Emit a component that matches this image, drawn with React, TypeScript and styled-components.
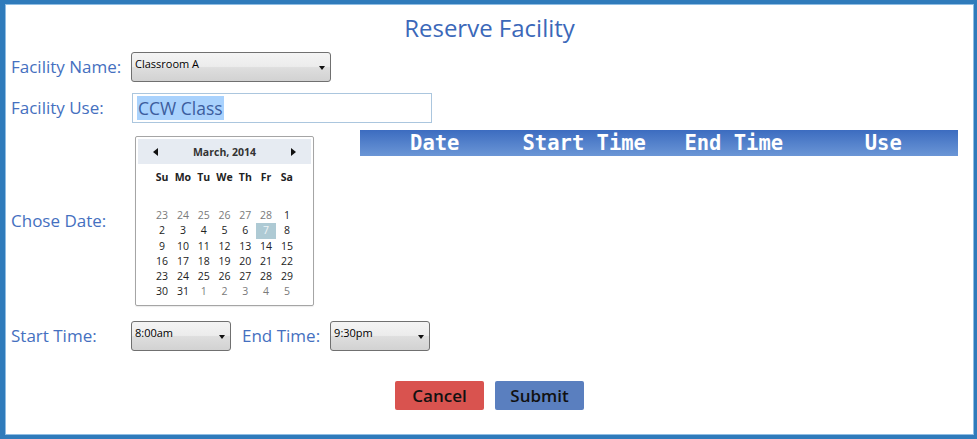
import React from "react";
import styled, { createGlobalStyle } from "styled-components";

const GlobalStyle = createGlobalStyle`
  html, body {
    margin: 0;
    padding: 0;
    background: #ffffff;
  }
  body {
    font-family: "Open Sans", "Noto Sans", sans-serif;
  }
  * {
    box-sizing: border-box;
  }
`;

const LABEL_BLUE = "#4570c0";

const weekDays = ["Su", "Mo", "Tu", "We", "Th", "Fr", "Sa"];

type Day = { n: number; other?: boolean; selected?: boolean };

const days: Day[] = [
  ...[23, 24, 25, 26, 27, 28].map((n) => ({ n, other: true })),
  ...Array.from({ length: 31 }, (_, i) => ({ n: i + 1, selected: i + 1 === 7 })),
  ...[1, 2, 3, 4, 5].map((n) => ({ n, other: true })),
];

const columns = ["Date", "Start Time", "End Time", "Use"];

const App = () => {
  return (
    <>
      <GlobalStyle />
      <Frame>
        <Title>Reserve Facility</Title>

        <Row $top={8}>
          <Label>Facility Name:</Label>
          <Combo $width={200}>
            <span>Classroom A</span>
            <Caret />
          </Combo>
        </Row>

        <Row $top={11}>
          <Label>Facility Use:</Label>
          <TextBox>
            <Selected>CCW Class</Selected>
          </TextBox>
        </Row>

        <DateRow>
          <DateLabel>Chose Date:</DateLabel>
          <Calendar>
            <CalHeader>
              <Arrow $dir="left" />
              <Month>March, 2014</Month>
              <Arrow $dir="right" />
            </CalHeader>
            <DayGrid>
              {weekDays.map((d) => (
                <WeekDay key={d}>{d}</WeekDay>
              ))}
            </DayGrid>
            <DayGrid $dates>
              {days.map((d, i) => (
                <DateCell key={i} $other={d.other} $selected={d.selected}>
                  {d.n}
                </DateCell>
              ))}
            </DayGrid>
          </Calendar>
          <TableArea>
            <TableHead>
              {columns.map((c) => (
                <HeadCell key={c}>{c}</HeadCell>
              ))}
            </TableHead>
          </TableArea>
        </DateRow>

        <Row $top={15}>
          <Label>Start Time:</Label>
          <Combo $width={100}>
            <span>8:00am</span>
            <Caret />
          </Combo>
          <InlineLabel>End Time:</InlineLabel>
          <Combo $width={100}>
            <span>9:30pm</span>
            <Caret />
          </Combo>
        </Row>

        <Buttons>
          <Button $bg="#d9534f">Cancel</Button>
          <Button $bg="#5a7fbf">Submit</Button>
        </Buttons>
      </Frame>
    </>
  );
};

export default App;

const Frame = styled.div`
  width: 977px;
  height: 439px;
  border: 4px solid #2f7bbb;
  border-left-width: 5px;
  border-right-width: 3px;
  box-shadow: inset 0 0 0 1px #8fbde3;
  padding: 0 0 0 6px;
  display: flex;
  flex-direction: column;
`;

const Title = styled.h1`
  margin: 8px 0 0;
  text-align: center;
  font-weight: 400;
  font-size: 24px;
  line-height: 32px;
  color: #3b68b9;
  padding-right: 6px;
`;

const Row = styled.div<{ $top: number }>`
  display: flex;
  align-items: center;
  margin-top: ${(p) => p.$top}px;
`;

const Label = styled.div`
  width: 120px;
  flex-shrink: 0;
  font-size: 17px;
  color: ${LABEL_BLUE};
  line-height: 22px;
`;

const DateLabel = styled(Label)`
  padding-top: 6px;
`;

const InlineLabel = styled(Label)`
  width: auto;
  margin: 0 10px 0 11px;
`;

const Combo = styled.div<{ $width: number }>`
  position: relative;
  width: ${(p) => p.$width}px;
  height: 30px;
  border: 1px solid #707070;
  border-radius: 3px;
  background: linear-gradient(
    to bottom,
    #f4f4f4 0%,
    #ececec 48%,
    #dedede 52%,
    #d2d2d2 100%
  );
  padding: 3px 0 0 3px;
  font-family: "Open Sans", sans-serif;
  font-size: 11px;
  line-height: 15px;
  color: #000;
`;

const Caret = styled.i`
  position: absolute;
  right: 5px;
  top: 13px;
  width: 0;
  height: 0;
  border-left: 3.5px solid transparent;
  border-right: 3.5px solid transparent;
  border-top: 4px solid #111;
`;

const TextBox = styled.div`
  width: 300px;
  height: 30px;
  margin-left: 1px;
  border: 1px solid #abc6de;
  padding: 3px 0 0 4px;
  font-size: 17.5px;
  line-height: 23px;
  color: #3c5d9e;
`;

const Selected = styled.span`
  background: #a9d2fd;
  padding: 0 1px;
`;

const DateRow = styled.div`
  display: flex;
  align-items: center;
  margin-top: 7px;
`;

const Calendar = styled.div`
  width: 179px;
  height: 170px;
  margin: 6px 0 0 4px;
  border: 1px solid #a5a5a5;
  border-radius: 2px;
  padding: 2px 2px 0;
  font-family: "Open Sans", sans-serif;
  font-size: 10.5px;
  box-shadow: 0 1px 1px rgba(0, 0, 0, 0.08);
  align-self: flex-start;
`;

const CalHeader = styled.div`
  height: 25px;
  background: #e6ebf2;
  display: flex;
  align-items: center;
  justify-content: space-between;
  padding: 0 15px;
`;

const Month = styled.span`
  font-weight: 700;
  color: #333;
  font-size: 10.5px;
`;

const Arrow = styled.i<{ $dir: "left" | "right" }>`
  width: 0;
  height: 0;
  border-top: 4.5px solid transparent;
  border-bottom: 4.5px solid transparent;
  ${(p) =>
    p.$dir === "left"
      ? "border-right: 5px solid #111;"
      : "border-left: 5px solid #111;"}
`;

const DayGrid = styled.div<{ $dates?: boolean }>`
  display: grid;
  grid-template-columns: repeat(7, 20.8px);
  grid-auto-rows: 15.2px;
  justify-content: center;
  margin-top: ${(p) => (p.$dates ? "23px" : "6px")};
`;

const WeekDay = styled.div`
  text-align: center;
  font-weight: 700;
  color: #222;
  line-height: 15px;
`;

const DateCell = styled.div<{ $other?: boolean; $selected?: boolean }>`
  text-align: center;
  line-height: 15px;
  color: ${(p) => (p.$selected ? "#eef4f7" : p.$other ? "#7a7a7a" : "#222")};
  background: ${(p) => (p.$selected ? "#aecad4" : "transparent")};
`;

const TableArea = styled.div`
  flex: 1;
  align-self: flex-start;
  padding: 0 16px 0 46px;
`;

const TableHead = styled.div`
  display: grid;
  grid-template-columns: repeat(4, 1fr);
  height: 26px;
  align-items: center;
  background: linear-gradient(to bottom, #3c6cc0 0%, #6b96d6 100%);
`;

const HeadCell = styled.div`
  text-align: center;
  color: #ffffff;
  font-family: "DejaVu Sans Mono", "Liberation Mono", monospace;
  font-weight: 700;
  font-size: 20.5px;
  line-height: 26px;
`;

const Buttons = styled.div`
  display: flex;
  justify-content: center;
  gap: 11px;
  margin-top: 30px;
  padding-right: 6px;
`;

const Button = styled.button<{ $bg: string }>`
  width: 89px;
  height: 29px;
  border: none;
  border-radius: 2px;
  background: ${(p) => p.$bg};
  color: #111;
  font-family: "Open Sans", sans-serif;
  font-weight: 600;
  font-size: 17px;
  padding: 0;
  cursor: pointer;
`;
